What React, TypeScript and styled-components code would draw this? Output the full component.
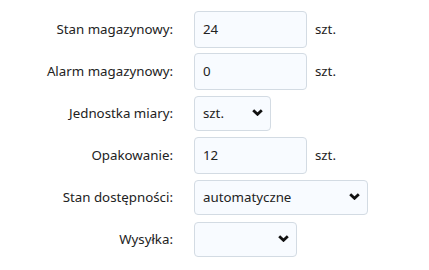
import styled, { createGlobalStyle } from 'styled-components';

const GlobalStyle = createGlobalStyle`
  html, body {
    margin: 0;
    padding: 0;
    background: #ffffff;
  }
  body {
    font-family: "Noto Sans", "DejaVu Sans", sans-serif;
    color: #222;
  }
`;

const Form = styled.div`
  display: grid;
  grid-template-columns: 173px auto;
  grid-auto-rows: 42px;
  column-gap: 21px;
  padding-top: 8px;
`;

const Label = styled.label`
  display: flex;
  align-items: center;
  justify-content: flex-end;
  font-size: 13.3px;
  color: #222;
`;

const Field = styled.div`
  display: flex;
  align-items: center;
  gap: 8px;
`;

const Input = styled.div<{ $w: number }>`
  box-sizing: border-box;
  width: ${(p) => p.$w}px;
  height: 37px;
  display: flex;
  align-items: center;
  padding: 0 8px;
  border: 1px solid #d3dbe3;
  border-radius: 4px;
  background: #f8fbff;
  font-size: 13.3px;
  color: #222;
`;

const Select = styled(Input)`
  height: 35px;
  justify-content: space-between;
  padding-right: 7px;
`;

const Unit = styled.span`
  font-size: 13.3px;
  color: #222;
`;

const ChevronIcon = styled.svg`
  margin-top: -1px;
`;

const Chevron = () => (
  <ChevronIcon width="11" height="7" viewBox="0 0 11 7">
    <path d="M1.2 1.2 L5.5 5.3 L9.8 1.2" fill="none" stroke="#111" strokeWidth="2.8" />
  </ChevronIcon>
);

const rows: { label: string; kind: 'input' | 'select'; value: string; width: number; unit?: string }[] = [
  { label: 'Stan magazynowy:', kind: 'input', value: '24', width: 113, unit: 'szt.' },
  { label: 'Alarm magazynowy:', kind: 'input', value: '0', width: 113, unit: 'szt.' },
  { label: 'Jednostka miary:', kind: 'select', value: 'szt.', width: 77 },
  { label: 'Opakowanie:', kind: 'input', value: '12', width: 113, unit: 'szt.' },
  { label: 'Stan dostępności:', kind: 'select', value: 'automatyczne', width: 174 },
  { label: 'Wysyłka:', kind: 'select', value: '', width: 103 },
];

const App = () => (
  <>
    <GlobalStyle />
    <Form>
      {rows.map((r) => (
        <>
          <Label key={r.label + 'l'}>{r.label}</Label>
          <Field key={r.label + 'f'}>
            {r.kind === 'input' ? (
              <Input $w={r.width}>{r.value}</Input>
            ) : (
              <Select $w={r.width}>
                <span>{r.value}</span>
                <Chevron />
              </Select>
            )}
            {r.unit && <Unit>{r.unit}</Unit>}
          </Field>
        </>
      ))}
    </Form>
  </>
);

export default App;
